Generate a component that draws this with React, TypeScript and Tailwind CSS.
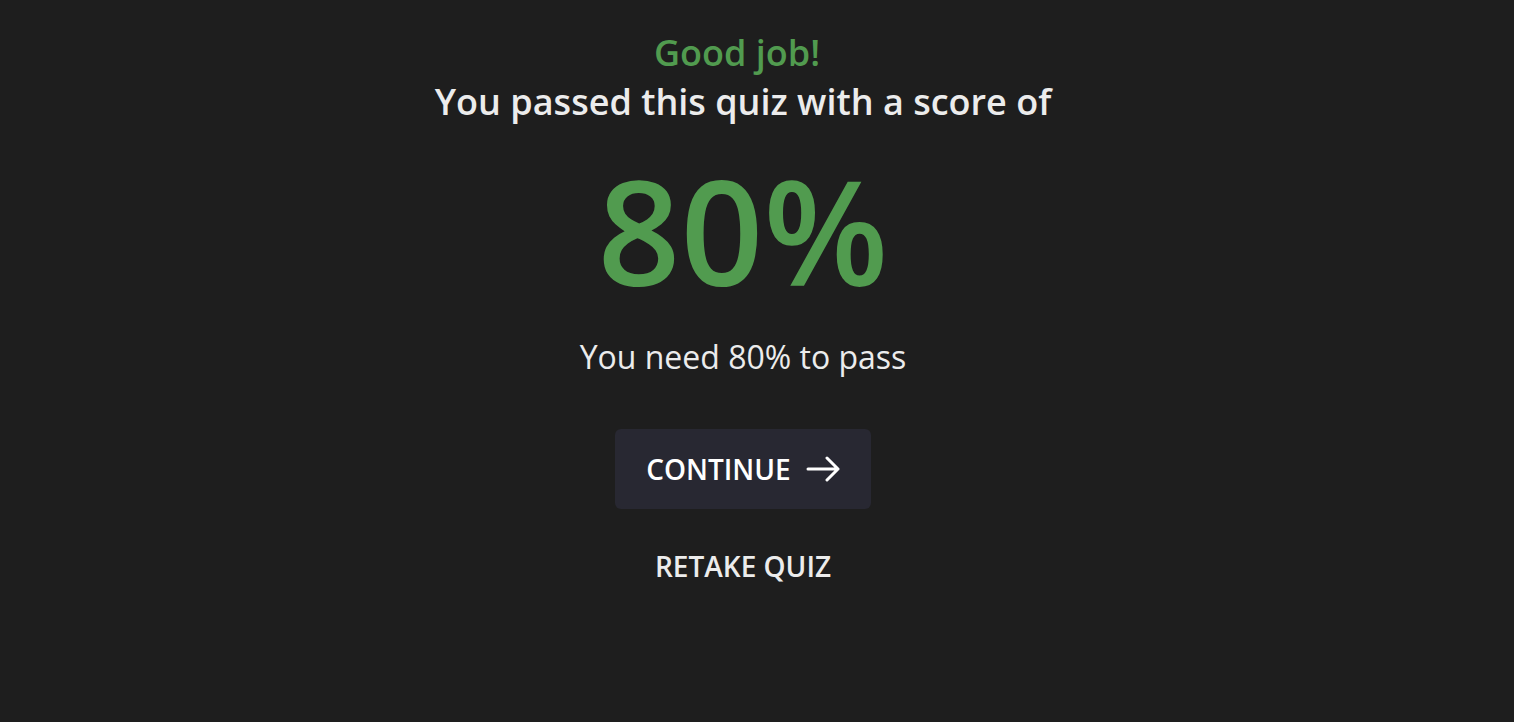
export default function App() {
  return (
    <div
      className="flex min-h-[722px] w-full flex-col items-center bg-[#1e1e1e] pr-[28px] pt-[28px] text-[#ececec]"
      style={{ fontFamily: '"Open Sans", sans-serif' }}
    >
      <h2 className="pr-[12px] text-[36px] font-semibold leading-[50px] text-[#519b4f]">Good job!</h2>
      <p className="text-[36px] font-semibold leading-[48px]">You passed this quiz with a score of</p>
      <div className="mt-[19px] text-[145px] font-semibold leading-[170px] text-[#519b4f]">80%</div>
      <p className="mt-[20px] text-[32px] leading-[44px]">You need 80% to pass</p>
      <button
        type="button"
        className="mt-[50px] flex h-[80px] w-[256px] items-center justify-center gap-[15px] rounded-md bg-[#282832] text-[28px] font-semibold text-white"
      >
        CONTINUE
        <svg width="34" height="26" viewBox="0 0 34 26" fill="none" stroke="currentColor" strokeWidth="3" strokeLinecap="round" strokeLinejoin="round">
          <path d="M2 13h30M21 2l11 11-11 11" />
        </svg>
      </button>
      <button type="button" className="mt-[36px] text-[28px] font-semibold text-[#ececec]">
        RETAKE QUIZ
      </button>
    </div>
  );
}
